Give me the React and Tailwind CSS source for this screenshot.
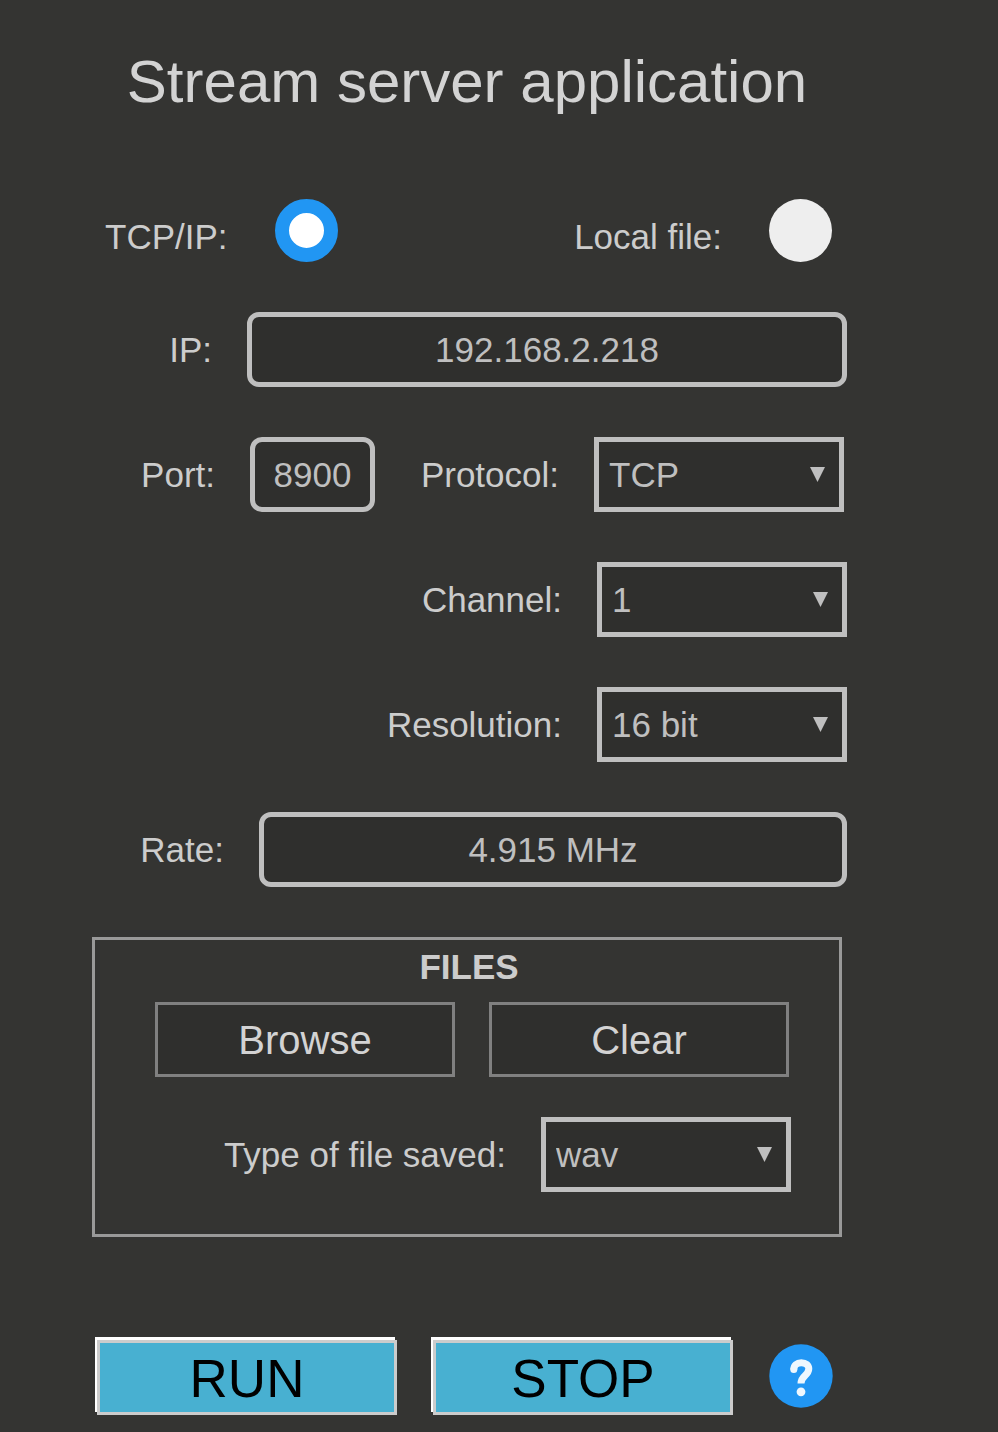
import { useState } from "react";

function Select({ id, options }) {
  return (
    <div className="relative w-[250px] shrink-0">
      <select
        id={id}
        className="block h-[75px] w-full appearance-none border-[5px] border-[#bfbfbf] bg-[#2f2f2d] pl-[10px] pr-12 text-[35px] leading-[65px] text-[#bfbfbf]"
      >
        {options.map((option) => (
          <option key={option}>{option}</option>
        ))}
      </select>
      <svg
        className="pointer-events-none absolute right-[19px] top-[30px] h-[15px] w-[15px]"
        viewBox="0 0 15 15"
        aria-hidden="true"
      >
        <path d="M0 0H15L7.5 15Z" fill="#bfbfbf" />
      </svg>
    </div>
  );
}

function Row({ children, className = "" }) {
  return <div className={`flex items-center gap-[35px] leading-[75px] ${className}`}>{children}</div>;
}

const field =
  "h-[75px] rounded-[12px] border-[5px] border-[#bfbfbf] bg-[#2f2f2d] text-center text-[35px] text-[#bfbfbf]";
const radio =
  "h-[63px] w-[63px] shrink-0 appearance-none rounded-full bg-[#eeeeee] checked:border-[14px] checked:border-[#2196f3] checked:bg-white";
const fileButton =
  "h-[75px] flex-1 border-[3px] border-[#808080] bg-[#2f2f2d] text-[40px] text-[#d3d3d3]";
const actionButton =
  "h-[75px] min-w-0 flex-1 border-[3px] border-[#cccccc] bg-[#48b0d1] pt-[2px] text-[53px] leading-[67px] text-black shadow-[-2px_-3px_0_0_#ffffff]";

export default function App() {
  const [source, setSource] = useState("tcp");

  return (
    <main className="min-h-screen bg-[#343432] pb-4 pl-[92px] pr-[151px] pt-[42px] font-['Liberation_Sans',Arial,sans-serif] text-[35px] text-[#cccccc]">
      <h1 className="mr-[5px] whitespace-nowrap text-center text-[60px] leading-[80px] text-[#d3d3d3]">
        Stream server application
      </h1>

      <form className="mt-[77px]" onSubmit={(e) => e.preventDefault()}>
        <div className="flex flex-col gap-[50px]">
          <div className="flex justify-between pl-[13px] pr-[15px]">
            <div className="flex items-end gap-[47px]">
              <label htmlFor="tcp" className="leading-[50px]">TCP/IP:</label>
              <input
                id="tcp"
                type="radio"
                name="source"
                className={radio}
                checked={source === "tcp"}
                onChange={() => setSource("tcp")}
              />
            </div>
            <div className="flex items-end gap-[47px]">
              <label htmlFor="local" className="leading-[50px]">Local file:</label>
              <input
                id="local"
                type="radio"
                name="source"
                className={radio}
                checked={source === "local"}
                onChange={() => setSource("local")}
              />
            </div>
          </div>

          <Row>
            <label htmlFor="ip" className="w-[120px] text-right">IP:</label>
            <input id="ip" type="text" defaultValue="192.168.2.218" className={`${field} min-w-0 flex-1`} />
          </Row>

          <Row className="pr-[3px]">
            <label htmlFor="port" className="w-[123px] text-right">Port:</label>
            <input id="port" type="text" defaultValue="8900" className={`${field} w-[125px]`} />
            <label htmlFor="protocol" className="flex-1 text-right">Protocol:</label>
            <Select id="protocol" options={["TCP", "UDP"]} />
          </Row>

          <Row className="justify-end">
            <label htmlFor="channel">Channel:</label>
            <Select id="channel" options={["1", "2"]} />
          </Row>

          <Row className="justify-end">
            <label htmlFor="resolution">Resolution:</label>
            <Select id="resolution" options={["16 bit", "8 bit"]} />
          </Row>

          <Row>
            <label htmlFor="rate" className="w-[132px] text-right">Rate:</label>
            <input id="rate" type="text" defaultValue="4.915 MHz" className={`${field} min-w-0 flex-1`} />
          </Row>

          <section className="mr-[5px] border-[3px] border-[#999999] pb-[42px]">
            <h2 className="pb-[10px] pl-1 pt-[2px] text-center font-bold leading-[50px]">FILES</h2>
            <div className="flex gap-[34px] pl-[60px] pr-[50px]">
              <button type="button" className={fileButton}>Browse</button>
              <button type="button" className={fileButton}>Clear</button>
            </div>
            <Row className="mt-10 justify-end pr-12">
              <label htmlFor="filetype">Type of file saved:</label>
              <Select id="filetype" options={["wav", "csv", "tdms"]} />
            </Row>
          </section>
        </div>

        <div className="mt-[103px] flex items-start gap-9 pl-[5px] pr-[14px]">
          <button type="submit" className={actionButton}>RUN</button>
          <button type="button" className={actionButton}>STOP</button>
          <button type="button" aria-label="Help" className="shrink-0 pt-1">
            <svg className="block h-16 w-16" viewBox="0 0 64 64" aria-hidden="true">
              <circle cx="32" cy="32" r="31.7" fill="#2196f3" />
              <path
                d="M24.8 25.5C24.8 21.3 27.8 18.7 32.3 18.7C37 18.7 39.8 21.2 39.8 24.8C39.8 28 38 29.8 35.8 31.8C33.3 34 32.1 35.3 32 39.5"
                fill="none"
                stroke="#eef7fe"
                strokeWidth="7"
                strokeLinejoin="round"
              />
              <circle cx="24.8" cy="25.5" r="3.5" fill="#eef7fe" />
              <circle cx="32" cy="47.8" r="4.4" fill="#eef7fe" />
            </svg>
          </button>
        </div>
      </form>
    </main>
  );
}
